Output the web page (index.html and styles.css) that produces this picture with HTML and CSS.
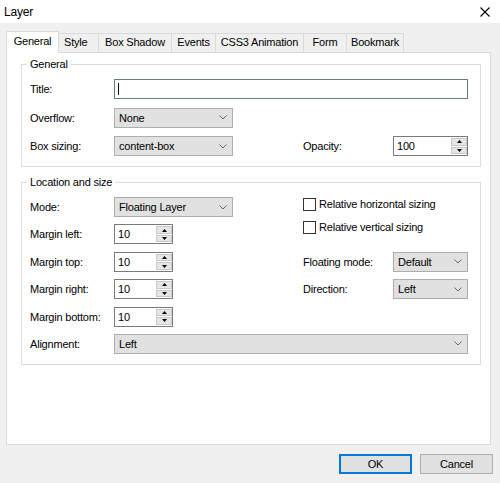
FILE: index.html
```html
<!DOCTYPE html>
<html lang="en">
<head>
  <meta charset="UTF-8">
  <title>Layer</title>
  <link rel="stylesheet" href="styles.css">
</head>
<body>

  <div class="titlebar">
    <span class="title">Layer</span>
    <svg class="close" width="10" height="10" viewBox="0 0 10 10">
      <path d="M0.5 0.5 L9.5 9.5 M9.5 0.5 L0.5 9.5" stroke="#000" stroke-width="1.1" fill="none"/>
    </svg>
  </div>

  <div class="dialog">
    <div class="tabs">
      <div class="tab tab-general active">General</div>
      <div class="tab tab-style">Style</div>
      <div class="tab tab-shadow">Box Shadow</div>
      <div class="tab tab-events">Events</div>
      <div class="tab tab-anim">CSS3 Animation</div>
      <div class="tab tab-form">Form</div>
      <div class="tab tab-bookmark">Bookmark</div>
    </div>

    <div class="panel">

      <fieldset class="group group-general">
        <legend>General</legend>
        <div class="grid">
          <label class="lbl">Title:</label>
          <div class="textbox wide"><span class="caret"></span></div>

          <label class="lbl">Overflow:</label>
          <div class="select">
            <span>None</span>
            <svg class="chev" width="8" height="5" viewBox="0 0 8 5"><polyline points="0.5,0.5 4,4 7.5,0.5" fill="none" stroke="#666" stroke-width="1"/></svg>
          </div>
          <div class="rest"></div>

          <label class="lbl">Box sizing:</label>
          <div class="select">
            <span>content-box</span>
            <svg class="chev" width="8" height="5" viewBox="0 0 8 5"><polyline points="0.5,0.5 4,4 7.5,0.5" fill="none" stroke="#666" stroke-width="1"/></svg>
          </div>
          <div class="gap"></div>
          <label class="lbl">Opacity:</label>
          <div class="spin">
            <span class="spin-val">100</span>
            <div class="spin-btns">
              <span class="spin-btn"><svg width="5" height="3" viewBox="0 0 5 3"><polygon points="2.5,0 5,3 0,3" fill="#000"/></svg></span>
              <span class="spin-btn"><svg width="5" height="3" viewBox="0 0 5 3"><polygon points="0,0 5,0 2.5,3" fill="#000"/></svg></span>
            </div>
          </div>
        </div>
      </fieldset>

      <fieldset class="group group-location">
        <legend>Location and size</legend>
        <div class="grid">
          <label class="lbl">Mode:</label>
          <div class="select">
            <span>Floating Layer</span>
            <svg class="chev" width="8" height="5" viewBox="0 0 8 5"><polyline points="0.5,0.5 4,4 7.5,0.5" fill="none" stroke="#666" stroke-width="1"/></svg>
          </div>
          <div class="gap"></div>
          <div class="checks">
            <div class="check"><span class="box"></span>Relative horizontal sizing</div>
            <div class="check"><span class="box"></span>Relative vertical sizing</div>
          </div>

          <label class="lbl">Margin left:</label>
          <div class="spin narrow">
            <span class="spin-val">10</span>
            <div class="spin-btns">
              <span class="spin-btn"><svg width="5" height="3" viewBox="0 0 5 3"><polygon points="2.5,0 5,3 0,3" fill="#000"/></svg></span>
              <span class="spin-btn"><svg width="5" height="3" viewBox="0 0 5 3"><polygon points="0,0 5,0 2.5,3" fill="#000"/></svg></span>
            </div>
          </div>
          <div class="gap"></div>

          <label class="lbl">Margin top:</label>
          <div class="spin narrow">
            <span class="spin-val">10</span>
            <div class="spin-btns">
              <span class="spin-btn"><svg width="5" height="3" viewBox="0 0 5 3"><polygon points="2.5,0 5,3 0,3" fill="#000"/></svg></span>
              <span class="spin-btn"><svg width="5" height="3" viewBox="0 0 5 3"><polygon points="0,0 5,0 2.5,3" fill="#000"/></svg></span>
            </div>
          </div>
          <div class="gap"></div>
          <label class="lbl">Floating mode:</label>
          <div class="select">
            <span>Default</span>
            <svg class="chev" width="8" height="5" viewBox="0 0 8 5"><polyline points="0.5,0.5 4,4 7.5,0.5" fill="none" stroke="#666" stroke-width="1"/></svg>
          </div>

          <label class="lbl">Margin right:</label>
          <div class="spin narrow">
            <span class="spin-val">10</span>
            <div class="spin-btns">
              <span class="spin-btn"><svg width="5" height="3" viewBox="0 0 5 3"><polygon points="2.5,0 5,3 0,3" fill="#000"/></svg></span>
              <span class="spin-btn"><svg width="5" height="3" viewBox="0 0 5 3"><polygon points="0,0 5,0 2.5,3" fill="#000"/></svg></span>
            </div>
          </div>
          <div class="gap"></div>
          <label class="lbl">Direction:</label>
          <div class="select">
            <span>Left</span>
            <svg class="chev" width="8" height="5" viewBox="0 0 8 5"><polyline points="0.5,0.5 4,4 7.5,0.5" fill="none" stroke="#666" stroke-width="1"/></svg>
          </div>

          <label class="lbl">Margin bottom:</label>
          <div class="spin narrow">
            <span class="spin-val">10</span>
            <div class="spin-btns">
              <span class="spin-btn"><svg width="5" height="3" viewBox="0 0 5 3"><polygon points="2.5,0 5,3 0,3" fill="#000"/></svg></span>
              <span class="spin-btn"><svg width="5" height="3" viewBox="0 0 5 3"><polygon points="0,0 5,0 2.5,3" fill="#000"/></svg></span>
            </div>
          </div>
          <div class="rest"></div>

          <label class="lbl">Alignment:</label>
          <div class="select wide">
            <span>Left</span>
            <svg class="chev" width="8" height="5" viewBox="0 0 8 5"><polyline points="0.5,0.5 4,4 7.5,0.5" fill="none" stroke="#666" stroke-width="1"/></svg>
          </div>
        </div>
      </fieldset>

    </div>

    <div class="buttons">
      <button class="btn btn-default">OK</button>
      <button class="btn">Cancel</button>
    </div>
  </div>

</body>
</html>
```

FILE: styles.css
```css
* {
  box-sizing: border-box;
}

body {
  margin: 0;
  background: #f0f0f0;
  font-family: "Liberation Sans", Arial, sans-serif;
  font-size: 11px;
  letter-spacing: -0.2px;
  color: #000;
}

.titlebar {
  height: 23px;
  background: #fff;
  display: flex;
  align-items: center;
  justify-content: space-between;
  padding: 1px 10px 0 4px;
}

.title {
  font-size: 12px;
}

.dialog {
  padding: 8px 7px 9px 6px;
}

/* tab strip */
.tabs {
  display: flex;
  align-items: flex-end;
  margin-right: 2px;
}

.tab {
  height: 19px;
  line-height: 17px;
  border: 1px solid #d9d9d9;
  border-bottom: none;
  margin-right: -1px;
  text-align: center;
  background: #f0f0f0;
}

.tab.active {
  height: 22px;
  line-height: 18px;
  margin-bottom: -1px;
  background: #fff;
  position: relative;
  z-index: 1;
}

.tab-general { width: 53px; }
.tab-style { width: 41px; text-align: left; padding-left: 5px; }
.tab-shadow { width: 74px; }
.tab-events { width: 45px; }
.tab-anim { width: 89px; }
.tab-form { width: 44px; }
.tab-bookmark { width: 58px; }

.panel {
  height: 393px;
  margin-right: 2px;
  background: #fff;
  border: 1px solid #d9d9d9;
  padding: 4px 9px 0 14px;
}

/* group boxes */
.group {
  margin: 0;
  min-width: 0;
  border: 1px solid #dcdcdc;
  padding: 8px 12px 10px 8px;
}

.group legend {
  padding: 0 3px;
  margin-left: -3px;
  line-height: 14px;
}

.group-location {
  margin-top: 8px;
}

.grid {
  display: grid;
  grid-template-columns: 84px 119px 70px 90px 75px;
  grid-auto-rows: 20px;
  row-gap: 8.5px;
}

.group-location .grid {
  row-gap: 7.4px;
}

.lbl {
  line-height: 20px;
  white-space: nowrap;
}

.rest {
  grid-column: span 3;
}

.wide {
  grid-column: 2 / -1;
}

/* controls */
.textbox {
  border: 1px solid #687a8b;
  background: #fff;
  padding: 3px 3px;
}

.caret {
  display: block;
  width: 1px;
  height: 12px;
  background: #000;
}

.select {
  display: flex;
  align-items: center;
  justify-content: space-between;
  background: #e1e1e1;
  border: 1px solid #adadad;
  padding: 0 5px 0 4px;
}

.chev {
  display: block;
}

.spin {
  display: flex;
  border: 1px solid #7a7a7a;
  background: #fff;
}

.spin.narrow {
  width: 59px;
}

.spin-val {
  flex: 1;
  line-height: 18px;
  padding-left: 3px;
}

.spin-btns {
  width: 16px;
  display: flex;
  flex-direction: column;
  gap: 1px;
  padding: 1px 0;
}

.spin-btn {
  flex: 1;
  display: flex;
  align-items: center;
  justify-content: center;
  background: #e6e6e6;
  border: 1px solid #c9c9c9;
}

.spin-btn svg {
  display: block;
}

.checks {
  grid-column: 4 / 6;
  grid-row: 1 / 3;
  display: flex;
  flex-direction: column;
  gap: 9px;
}

.check {
  display: flex;
  align-items: center;
  gap: 3px;
  line-height: 14px;
  white-space: nowrap;
}

.box {
  width: 13px;
  height: 13px;
  border: 1px solid #333;
  background: #fff;
}

/* dialog buttons */
.buttons {
  display: flex;
  justify-content: flex-end;
  gap: 8px;
  margin-top: 9px;
}

.btn {
  width: 73px;
  height: 20px;
  padding: 0;
  background: #e1e1e1;
  border: 1px solid #adadad;
  font-family: inherit;
  font-size: 11px;
  letter-spacing: -0.2px;
  color: #000;
}

.btn-default {
  border: 2px solid #0078d7;
}
```
